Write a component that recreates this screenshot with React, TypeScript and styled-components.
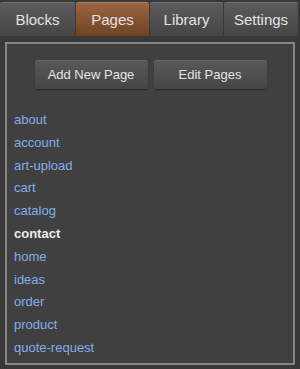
import styled, { createGlobalStyle } from 'styled-components'

const GlobalStyle = createGlobalStyle`
    html, body {
        margin: 0;
        padding: 0;
        background: #383838;
    }
    body {
        font-family: 'Liberation Sans', Arial, sans-serif;
    }
`

const Frame = styled.div`
    width: 300px;
    height: 369px;
    background: #383838;
    box-sizing: border-box;
    padding-top: 2px;
`

const TabBar = styled.div`
    display: flex;
    gap: 1px;
    height: 34px;
    padding-right: 2px;
`

const TabItem = styled.div<{ $active?: boolean; $w: number }>`
    width: ${p => p.$w}px;
    display: flex;
    align-items: center;
    justify-content: center;
    font-size: 15px;
    color: #e2e2e2;
    border-radius: 2px 2px 0 0;
    background: ${p => p.$active
        ? 'linear-gradient(#9c6541, #6e4324)'
        : 'linear-gradient(#5c5c5c, #454545)'};
    box-shadow: inset 0 1px 0 ${p => p.$active ? 'rgba(255,200,160,0.25)' : 'rgba(255,255,255,0.12)'};
`

const Panel = styled.div`
    margin: 6px 5px 0 5px;
    height: 323px;
    border: 2px solid #858585;
    background: #404040;
    box-sizing: border-box;
`

const ButtonRow = styled.div`
    display: flex;
    justify-content: center;
    gap: 6px;
    padding-top: 16px;
    padding-left: 1px;
`

const ActionButton = styled.div`
    width: 113px;
    height: 29px;
    display: flex;
    align-items: center;
    justify-content: center;
    font-size: 13px;
    color: #e4e4e4;
    border-radius: 3px;
    background: linear-gradient(#585858, #464646);
    box-shadow: inset 0 1px 0 rgba(255,255,255,0.1), 0 1px 1px rgba(0,0,0,0.4);
`

const PageList = styled.div`
    display: flex;
    flex-direction: column;
    padding: 20px 0 0 7px;
`

const PageLink = styled.div<{ $current?: boolean }>`
    height: 22.8px;
    line-height: 22.8px;
    font-size: 13px;
    color: ${p => p.$current ? '#ececec' : '#80aeec'};
    font-weight: ${p => p.$current ? 'bold' : 'normal'};
`

const tabs = [
    { name: 'Blocks', w: 75 },
    { name: 'Pages', w: 73, active: true },
    { name: 'Library', w: 73 },
    { name: 'Settings', w: 74 },
]

const pages = ['about', 'account', 'art-upload', 'cart', 'catalog', 'contact', 'home', 'ideas', 'order', 'product', 'quote-request']

export default function App() {
    return (
        <>
            <GlobalStyle />
            <Frame>
                <TabBar>
                    {tabs.map(t => (
                        <TabItem key={t.name} $w={t.w} $active={t.active}>{t.name}</TabItem>
                    ))}
                </TabBar>
                <Panel>
                    <ButtonRow>
                        <ActionButton>Add New Page</ActionButton>
                        <ActionButton>Edit Pages</ActionButton>
                    </ButtonRow>
                    <PageList>
                        {pages.map(p => (
                            <PageLink key={p} $current={p === 'contact'}>{p}</PageLink>
                        ))}
                    </PageList>
                </Panel>
            </Frame>
        </>
    )
}
